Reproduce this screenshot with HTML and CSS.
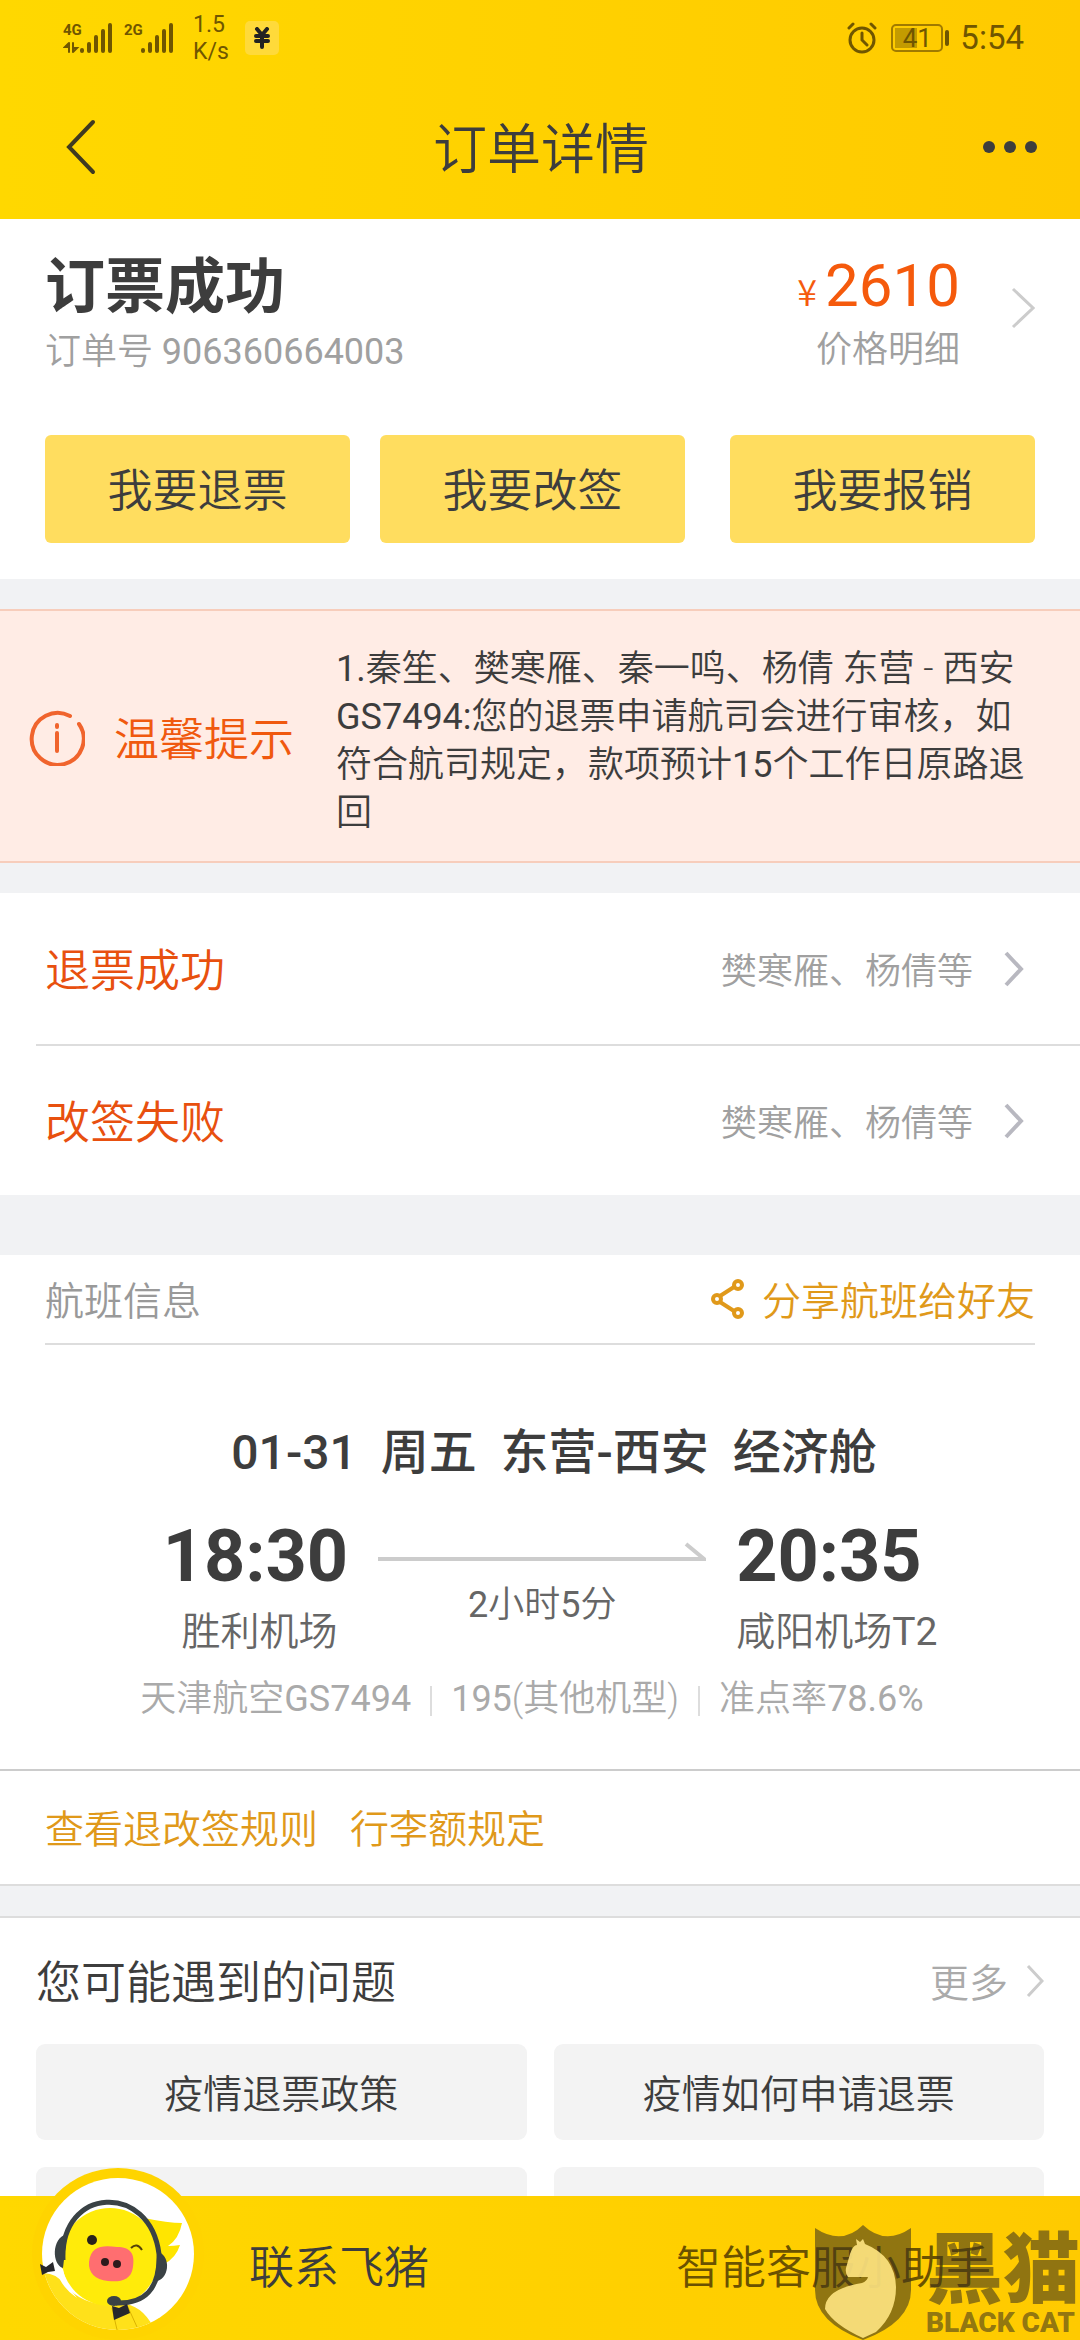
FILE: index.html
```
<!DOCTYPE html>
<html lang="zh-CN">

<head>
    <meta charset="UTF-8">
    <meta name="viewport" content="width=device-width">
    <title>订单详情</title>
    <link rel="stylesheet" href="styles.css">
</head>

<body>
    <header class="header">
        <div class="status-bar">
            <svg class="signal" width="50" height="36" viewBox="0 0 50 36">
                <text x="0" y="15">4G</text>
                <path class="arrows" d="M6 23v9M6 23l-4 4h4M10 23v9M10 32l4-4h-4" />
                <path class="bars" d="M19 30v1M26 24v7M33 17v14M40 11v20M47 5v26" />
            </svg>
            <svg class="signal" width="50" height="36" viewBox="0 0 50 36">
                <text x="0" y="15">2G</text>
                <path class="bars" d="M19 30v1M26 24v7M33 17v14M40 11v20M47 5v26" />
            </svg>
            <div class="speed">1.5<br>K/s</div>
            <div class="yen-badge">
                <svg width="16" height="22" viewBox="0 0 16 22">
                    <path d="M3 2l5 6 5-6M8 8v12M2 9h12M2 14h12" />
                </svg>
            </div>
            <div class="status-right">
                <svg width="30" height="32" viewBox="0 0 30 32">
                    <g class="alarm">
                        <circle cx="15" cy="18" r="12" />
                        <path d="M15 11v7l5 5M2 6l4-4M28 6l-4-4" />
                    </g>
                </svg>
                <div class="battery"><span>41</span></div>
                <span class="clock">5:54</span>
            </div>
        </div>
        <div class="title-bar">
            <button class="icon-btn" aria-label="返回">
                <svg width="32" height="56" viewBox="0 0 32 56">
                    <path class="back" d="M29 3L5 28l24 25" />
                </svg>
            </button>
            <h1>订单详情</h1>
            <button class="icon-btn" aria-label="更多操作">
                <svg width="56" height="16" viewBox="0 0 56 16">
                    <circle cx="7" cy="8" r="6" />
                    <circle cx="28" cy="8" r="6" />
                    <circle cx="49" cy="8" r="6" />
                </svg>
            </button>
        </div>
    </header>

    <main class="content">
        <section class="order">
            <div class="order-top">
                <div>
                    <h2>订票成功</h2>
                    <p class="sub">订单号 <b>906360664003</b></p>
                </div>
                <a class="price" href="#">
                    <span class="price-text">
                        <span class="amount"><small>¥</small>2610</span>
                        <span class="sub">价格明细</span>
                    </span>
                    <svg width="24" height="42" viewBox="0 0 24 42">
                        <path class="chevron" d="M2 2l20 19L2 40" />
                    </svg>
                </a>
            </div>
            <div class="actions">
                <button>我要退票</button>
                <button>我要改签</button>
                <button class="last">我要报销</button>
            </div>
        </section>

        <section class="notice">
            <svg width="56" height="56" viewBox="0 0 56 56">
                <path class="ring" d="M41 6A26 26 0 1 0 50 14" />
                <path class="ring" d="M28 23v18M28 15v2" />
            </svg>
            <h3>温馨提示</h3>
            <p><b>1.</b>秦笙、樊寒雁、秦一鸣、杨倩 东营 - 西安<b>GS7494:</b>您的退票申请航司会进行审核，如符合航司规定，款项预计<b>15</b>个工作日原路退回</p>
        </section>

        <section class="progress">
            <a class="progress-row" href="#">
                <strong>退票成功</strong>
                <span>樊寒雁、杨倩等</span>
                <svg width="20" height="36" viewBox="0 0 20 36">
                    <path class="chevron bold" d="M2 2l15 16L2 34" />
                </svg>
            </a>
            <a class="progress-row" href="#">
                <strong>改签失败</strong>
                <span>樊寒雁、杨倩等</span>
                <svg width="20" height="36" viewBox="0 0 20 36">
                    <path class="chevron bold" d="M2 2l15 16L2 34" />
                </svg>
            </a>
        </section>

        <section class="flight">
            <div class="flight-head">
                <span>航班信息</span>
                <a class="link" href="#">
                    <svg width="34" height="40" viewBox="0 0 34 40">
                        <g class="share">
                            <circle cx="7" cy="20" r="4" />
                            <circle cx="28" cy="6" r="4" />
                            <circle cx="28" cy="34" r="4" />
                            <path d="M10 17L24 8M10 23l14 9" />
                        </g>
                    </svg>
                    <span>分享航班给好友</span>
                </a>
            </div>
            <h3>01-31&nbsp; 周五&nbsp; 东营-西安&nbsp; 经济舱</h3>
            <div class="route">
                <div class="stop depart">
                    <time>18:30</time>
                    <span>胜利机场</span>
                </div>
                <div class="duration">
                    <svg width="328" height="22" viewBox="0 0 328 22">
                        <path d="M0 18h326L308 3" />
                    </svg>
                    <span><b>2</b>小时<b>5</b>分</span>
                </div>
                <div class="stop arrive">
                    <time>20:35</time>
                    <span>咸阳机场<b>T2</b></span>
                </div>
            </div>
            <div class="plane">
                <span>天津航空<b>GS7494</b></span>
                <span><b>195</b>(其他机型)</span>
                <span>准点率<b>78.6%</b></span>
            </div>
            <div class="rules">
                <a class="link" href="#">查看退改签规则</a>
                <a class="link" href="#">行李额规定</a>
            </div>
        </section>

        <section class="faq">
            <div class="faq-head">
                <h3>您可能遇到的问题</h3>
                <a href="#"><span>更多</span>
                    <svg width="18" height="34" viewBox="0 0 18 34">
                        <path class="chevron" d="M2 2l14 15L2 32" />
                    </svg>
                </a>
            </div>
            <div class="faq-grid">
                <button>疫情退票政策</button>
                <button>疫情如何申请退票</button>
                <button></button>
                <button></button>
            </div>
        </section>
    </main>

    <footer class="footer">
        <svg class="avatar" width="172" height="172" viewBox="0 0 172 172">
            <defs>
                <clipPath id="face">
                    <circle cx="86" cy="86" r="76" />
                </clipPath>
            </defs>
            <circle cx="86" cy="86" r="86" fill="#ffd400" />
            <circle cx="86" cy="86" r="76" fill="#fff" />
            <g clip-path="url(#face)">
                <path d="M112 50q24 5 38 5-3 16-14 23 6 0 12-1-4 13-16 19z" fill="#ffe500" />
                <path d="M0 108q20-8 32 8 20 24 54 20 22-2 36 24l-40 16H0z" fill="#ffe11a" />
                <ellipse cx="78" cy="89" rx="49" ry="49" fill="#ffeb0a" />
                <path d="M24 99q3 19 21 31-11-13-14-29z" fill="#fff" />
                <path d="M80 140l6 26M95 137l10 22" stroke="#d9b200" stroke-width="1" fill="none" />
                <path d="M31 92C28 18 118 14 127 86 128 122 112 136 84 135" stroke="#3a4245" stroke-width="5" fill="none" />
                <path d="M35 66c-16 4-15 31-4 34zM127 84c12 5 11 28-5 30z" fill="#3a4245" />
                <ellipse cx="82" cy="133" rx="7" ry="5" fill="#3a4245" />
                <path d="M80 138l7 2 8-4 3 9-16 7z" fill="#28282c" />
                <circle cx="60" cy="72" r="5" fill="#28221c" />
                <path d="M99 80q6-6 11 2" stroke="#55420a" stroke-width="2" fill="none" />
                <path d="M57 94c2-16 13-17 28-15 14 0 18 7 16 20-2 14-13 15-25 14-13-1-20-9-19-19z" fill="#ff6e70" />
                <circle cx="73" cy="94" r="4" fill="#2d1a1c" />
                <circle cx="85" cy="96" r="4" fill="#2d1a1c" />
            </g>
            <path d="M8 96l6 3 7-5 2 9-7 1-6 3z" fill="#28282c" />
        </svg>
        <a href="#">联系飞猪</a>
        <a class="helper" href="#">智能客服小助手</a>
        <div class="watermark">
            <svg width="98" height="115" viewBox="0 0 98 115">
                <path class="shield" d="M1 3q27 18 48-3 22 21 48 3v62q0 32-48 50Q1 97 1 65z" />
                <path class="cat" d="M42 14l4 3 3-3 2 5q30 12 31 43 0 27-20 45l-13 6Q20 100 11 84q0-20 37-26 5-2 6-6H34q-3-4-2-9l4-14q3-9 7-9z" />
            </svg>
            <div>
                <strong>黑猫</strong>
                <small>BLACK CAT</small>
            </div>
        </div>
    </footer>
</body>

</html>
```
FILE: styles.css
```
* {
    box-sizing: border-box;
}

body {
    margin: 0;
    height: 100vh;
    display: flex;
    flex-direction: column;
    font-family: Roboto, "Noto Sans CJK SC", sans-serif;
    font-size: 36px;
    font-weight: 350;
    line-height: 48px;
    color: #3d3d3d;
    background-color: #f1f2f4;
}

h1, h2, h3, p {
    margin: 0;
    font-weight: inherit;
}

/* latin letters and digits, one step heavier than the chinese text */
b {
    font-weight: 400;
}

a {
    color: inherit;
    text-decoration: none;
}

button {
    border: 0;
    padding: 0;
    font: inherit;
    color: inherit;
}

svg {
    flex: none;
    display: block;
}

/* header */
.header {
    flex: none;
    height: 219px;
    background: linear-gradient(to right, #ffd800, #ffca00);
}

.status-bar {
    display: flex;
    align-items: center;
    height: 75px;
    padding: 0 56px 0 63px;
    font-weight: 400;
    color: #705600;
}

.signal {
    margin-right: 11px;
}

.signal text {
    font-size: 15px;
    font-weight: 700;
    fill: #705600;
}

.signal path {
    fill: none;
    stroke: #705600;
    stroke-width: 4;
    stroke-linecap: round;
}

.signal .arrows {
    stroke-width: 2;
}

.speed {
    margin: 0 16px 0 8px;
    font-size: 23px;
    line-height: 27px;
}

.yen-badge {
    display: flex;
    align-items: center;
    justify-content: center;
    width: 34px;
    height: 34px;
    border-radius: 5px;
    background-color: #ffda3a;
}

.yen-badge path {
    fill: none;
    stroke: #222;
    stroke-width: 4;
    stroke-linecap: round;
}

.status-right {
    display: flex;
    align-items: center;
    margin-left: auto;
}

.alarm {
    fill: none;
    stroke: #705600;
    stroke-width: 3;
    stroke-linecap: round;
}

.battery {
    position: relative;
    width: 52px;
    height: 28px;
    margin: 0 17px 0 14px;
    border: 2px solid #a07a00;
    border-radius: 5px;
    font-size: 26px;
    line-height: 25px;
    text-align: center;
    background: linear-gradient(#c39b00, #c39b00) 2px 2px / 22px 20px no-repeat;
}

.battery::after {
    content: "";
    position: absolute;
    right: -8px;
    top: 4px;
    width: 4px;
    height: 16px;
    border-radius: 2px;
    background-color: #705600;
}

.clock {
    font-size: 33px;
}

.title-bar {
    display: grid;
    grid-template-columns: 1fr auto 1fr;
    align-items: center;
    height: 144px;
    padding: 0 42px 0 64px;
}

.title-bar h1 {
    font-size: 54px;
    line-height: 72px;
    padding: 8px 20px 0 0;
}

.icon-btn {
    background: none;
}

.icon-btn:last-child {
    justify-self: end;
}

.icon-btn:first-child {
    justify-self: start;
}

.icon-btn svg {
    fill: #3d3d3d;
}

.icon-btn .back {
    fill: none;
    stroke: #3f3a20;
    stroke-width: 4;
    stroke-linecap: round;
}

.content {
    flex: 1;
    min-height: 0;
    overflow: hidden;
}

.chevron {
    fill: none;
    stroke: #ccc;
    stroke-width: 3;
}

.chevron.bold {
    stroke: #b8b8c0;
    stroke-width: 4;
}

.sub {
    color: #a0a0a0;
}

.link {
    color: #e0991a;
}

/* order summary */
.order {
    padding: 33px 45px 36px;
    background-color: #fff;
}

.order-top {
    display: flex;
    justify-content: space-between;
}

.order h2 {
    font-size: 60px;
    font-weight: 700;
    line-height: 72px;
    margin-bottom: 4px;
}

.price {
    display: flex;
    align-items: center;
    gap: 51px;
}

.price-text {
    display: grid;
    justify-items: end;
    row-gap: 4px;
}

.price svg {
    margin-bottom: 12px;
}

.amount {
    font-size: 60px;
    font-weight: 400;
    line-height: 64px;
    color: #f55a0c;
}

.amount small {
    margin-right: 8px;
    font-family: "Noto Sans CJK SC", sans-serif;
    font-size: 36px;
    font-weight: 350;
}

.actions {
    display: flex;
    gap: 30px;
    margin-top: 59px;
}

.actions button {
    flex: 1;
    height: 108px;
    padding-top: 6px;
    border-radius: 6px;
    font-size: 45px;
    background-color: #ffdd5f;
}

.actions .last {
    margin-left: 15px;
}

/* notice */
.notice {
    display: flex;
    align-items: center;
    margin: 30px 0;
    padding: 28px 45px 24px 29px;
    border: solid #f7cdbb;
    border-width: 2px 0;
    background-color: #ffece5;
}

.notice h3 {
    flex: none;
    margin: 0 42px 0 29px;
    padding-top: 6px;
    font-size: 45px;
    color: #f0590f;
}

.notice p {
    padding-top: 6px;
}

.ring {
    fill: none;
    stroke: #f0642d;
    stroke-width: 4;
    stroke-linecap: round;
}

/* refund and change progress */
.progress {
    background-color: #fff;
}

.progress-row {
    display: flex;
    align-items: center;
    height: 151px;
    margin-left: 36px;
    padding: 0 56px 0 9px;
}

.progress-row + .progress-row {
    border-top: 2px solid #ddd;
}

.progress-row strong {
    margin-right: auto;
    padding-top: 6px;
    font-size: 45px;
    font-weight: inherit;
    color: #e8500f;
}

.progress-row span {
    margin-right: 31px;
    padding-top: 6px;
    color: #a0a0a0;
}

/* flight */
.flight {
    margin-top: 60px;
    border-bottom: 2px solid #ddd;
    background-color: #fff;
}

.flight-head {
    display: flex;
    justify-content: space-between;
    align-items: center;
    height: 90px;
    margin: 0 45px;
    border-bottom: 2px solid #ddd;
    font-size: 39px;
    color: #999;
}

.flight-head span {
    padding-top: 6px;
}

.flight-head .link {
    display: flex;
    align-items: center;
    gap: 18px;
}

.share {
    fill: none;
    stroke: #e0991a;
    stroke-width: 4;
}

.flight h3 {
    margin-top: 80px;
    font-size: 48px;
    font-weight: 500;
    line-height: 56px;
    text-align: center;
    padding-left: 28px;
}

.route {
    display: flex;
    justify-content: center;
    gap: 30px;
    margin-top: 34px;
    padding-left: 20px;
}

.stop {
    display: grid;
    justify-items: center;
}

.stop.arrive {
    justify-items: start;
}

.stop time {
    font-size: 72px;
    font-weight: 700;
    line-height: 84px;
}

.stop span {
    margin-top: 9px;
    font-size: 39px;
    color: #666;
}

.stop.depart span {
    padding-left: 8px;
}

.duration {
    display: grid;
    justify-items: center;
    align-content: start;
    row-gap: 18px;
    padding-top: 26px;
    color: #666;
}

.duration path {
    fill: none;
    stroke: #ccc;
    stroke-width: 4;
}

.plane {
    display: flex;
    justify-content: center;
    margin: 19px 0 46px;
    padding-right: 16px;
    color: #aaa;
}

.plane span + span {
    margin-left: 19px;
    padding-left: 21px;
    background: linear-gradient(#ddd, #ddd) 0 60% / 2px 30px no-repeat;
}

.rules {
    display: flex;
    align-items: center;
    gap: 32px;
    height: 115px;
    padding: 4px 45px 0;
    border-top: 2px solid #ccc;
    font-size: 39px;
}

/* questions */
.faq {
    margin-top: 30px;
    padding: 0 36px;
    border-top: 2px solid #ddd;
    background-color: #fff;
}

.faq-head {
    display: flex;
    justify-content: space-between;
    align-items: center;
    height: 126px;
}

.faq-head h3 {
    padding-top: 6px;
    font-size: 45px;
}

.faq-head a {
    display: flex;
    align-items: center;
    gap: 18px;
    font-size: 39px;
    color: #aaa;
}

.faq-head span {
    padding-top: 6px;
}

.faq-grid {
    display: grid;
    grid-template-columns: 1fr 1fr;
    gap: 27px;
}

.faq-grid button {
    height: 96px;
    padding-top: 6px;
    border-radius: 9px;
    font-size: 39px;
    background-color: #f3f3f3;
}

/* bottom bar */
.footer {
    position: relative;
    flex: none;
    display: flex;
    justify-content: space-between;
    align-items: center;
    height: 144px;
    padding: 2px 89px 0 249px;
    font-size: 45px;
    background: linear-gradient(to right, #ffd800, #ffca00);
}

.avatar {
    position: absolute;
    left: 32px;
    bottom: 0;
}

.helper {
    color: #6b5200;
}

.watermark {
    position: absolute;
    right: 0;
    bottom: 0;
    display: flex;
    gap: 14px;
    color: rgba(64, 54, 30, 0.58);
}

.watermark div {
    display: grid;
    align-content: start;
    padding-top: 10px;
}

.watermark strong {
    font-size: 77px;
    font-weight: 900;
    line-height: 72px;
}

.watermark small {
    font-size: 28px;
    font-weight: 900;
    line-height: 32px;
}

.shield {
    fill: rgba(64, 54, 30, 0.58);
}

.cat {
    fill: #ffe682;
    fill-opacity: 0.9;
}
```
